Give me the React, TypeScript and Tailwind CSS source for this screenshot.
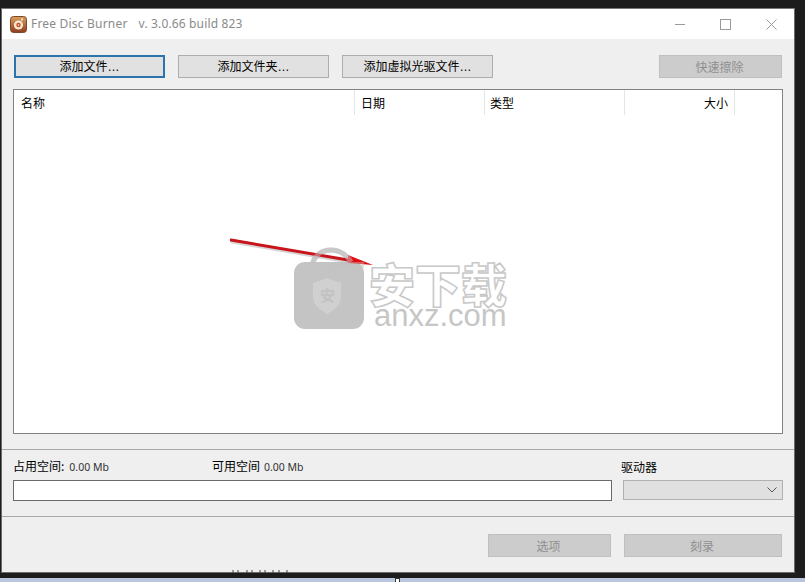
import React from "react";

const cjk = { fontFamily: '"Noto Sans CJK SC","Liberation Sans",sans-serif' };
const latin = { fontFamily: '"Noto Sans","Liberation Sans",sans-serif' };
const dots = { fontFamily: '"Liberation Sans",sans-serif' };

function Btn({ w, label, ellipsis, primary, disabled }: { w: string; label: string; ellipsis?: boolean; primary?: boolean; disabled?: boolean }) {
  return (
    <div
      className={`${w} h-[23px] flex items-center justify-center text-[12px] leading-none ${
        disabled
          ? "bg-[#cccccc] border border-[#bfbfbf] text-[#8f8f8f] pr-[2px]"
          : primary
            ? "bg-[#e1e1e1] border-2 border-[#2b74ad] text-black"
            : "bg-[#e1e1e1] border border-[#adadad] text-black"
      }`}
    >
      <span>
        {label}
        {ellipsis ? <span style={dots}>…</span> : null}
      </span>
    </div>
  );
}

function Col({ w, label, pad }: { w: string; label: string; pad: string }) {
  return (
    <div className={`${w} h-[25px] shrink-0 border-r border-[#e5e5e5] flex items-center text-[12px] text-black ${pad}`}>
      {label}
    </div>
  );
}

export default function App() {
  return (
    <div className="relative w-[805px] h-[582px] overflow-hidden bg-[#1c1c1c] flex flex-col" style={cjk}>
      <div className="ml-[1px] mt-[8px] w-[794px] h-[565px] shrink-0 flex flex-col bg-[#efefef] border border-[#6b6b6b] border-t-[#777]">
        {/* title bar */}
        <div className="h-[30px] bg-white flex items-center shrink-0">
          <svg width="17" height="17" viewBox="0 0 17 17" className="ml-[8px]">
            <defs>
              <linearGradient id="g" x1="0" y1="0" x2="0" y2="1">
                <stop offset="0" stopColor="#d9a05e" />
                <stop offset="1" stopColor="#8e3d1f" />
              </linearGradient>
            </defs>
            <rect x="0.5" y="0.5" width="16" height="16" rx="3" fill="url(#g)" stroke="#7a4a2a" />
            <circle cx="8.5" cy="9" r="4.6" fill="#f6e6d0" />
            <circle cx="8.5" cy="9" r="2.2" fill="#c8481f" />
            <circle cx="8.5" cy="9" r="0.8" fill="#fff" />
            <rect x="11" y="2.5" width="2" height="2" fill="#f6e6d0" />
          </svg>
          <span className="ml-[4px] text-[12px] tracking-[0.2px] text-[#8a8a8a]" style={latin}>
            Free Disc Burner
          </span>
          <span className="ml-[11px] text-[12px] tracking-[0.15px] text-[#8a8a8a]" style={latin}>
            v. 3.0.66 build 823
          </span>
          <div className="ml-auto flex items-center mr-[17px] gap-[35px]">
            <svg width="10" height="10" viewBox="0 0 10 10"><path d="M0 5.5h10" stroke="#9a9a9a" fill="none" /></svg>
            <svg width="11" height="11" viewBox="0 0 11 11"><rect x="0.5" y="0.5" width="10" height="10" stroke="#9a9a9a" fill="none" /></svg>
            <svg width="11" height="11" viewBox="0 0 11 11"><path d="M0.5 0.5l10 10M10.5 0.5l-10 10" stroke="#9a9a9a" fill="none" /></svg>
          </div>
        </div>

        {/* toolbar */}
        <div className="flex items-center mt-[16px] ml-[12px] mr-[12px] shrink-0">
          <Btn w="w-[151px]" label="添加文件" ellipsis primary />
          <div className="w-[13px]" />
          <Btn w="w-[151px]" label="添加文件夹" ellipsis />
          <div className="w-[13px]" />
          <Btn w="w-[151px]" label="添加虚拟光驱文件" ellipsis />
          <div className="ml-auto">
            <Btn w="w-[123px]" label="快速擦除" disabled />
          </div>
        </div>

        {/* list */}
        <div className="mt-[11px] ml-[11px] w-[770px] h-[345px] bg-white border border-[#828282] shrink-0 flex">
          <Col w="w-[341px]" label="名称" pad="pl-[7px]" />
          <Col w="w-[130px]" label="日期" pad="pl-[6px]" />
          <Col w="w-[140px]" label="类型" pad="pl-[5px]" />
          <Col w="w-[110px]" label="大小" pad="justify-end pr-[6px]" />
        </div>

        <div className="mt-[15px] h-px bg-[#a8a8a8] shrink-0" />

        {/* space */}
        <div className="flex ml-[11px] mr-[11px] mt-[3px] shrink-0">
          <div className="w-[599px]">
            <div className="h-[27px] flex items-center text-[12px] text-black leading-none">
              <span className="w-[199px]">
                占用空间:<span className="ml-[5px] text-[10.5px] text-[#333]" style={latin}>0.00 Mb</span>
              </span>
              <span>
                可用空间<span className="ml-[4px] text-[10.5px] text-[#333]" style={latin}>0.00 Mb</span>
              </span>
            </div>
            <div className="h-[21px] bg-white border border-[#6a6a6a]" />
          </div>
          <div className="ml-[11px] w-[160px]">
            <div className="h-[27px] flex items-center text-[12px] text-black -ml-[2px]">驱动器</div>
            <div className="h-[20px] bg-[#e0e0e0] border border-[#b0b0b0] flex items-center justify-end pr-[5px]">
              <svg width="10" height="6" viewBox="0 0 10 6"><path d="M0.5 0.5L5 5l4.5-4.5" stroke="#555" fill="none" /></svg>
            </div>
          </div>
        </div>

        <div className="mt-[15px] h-px bg-[#a8a8a8] shrink-0" />

        {/* bottom buttons */}
        <div className="flex justify-end mt-[17px] mr-[12px] gap-[13px] shrink-0">
          <Btn w="w-[123px]" label="选项" disabled />
          <Btn w="w-[158px]" label="刻录" disabled />
        </div>
      </div>
      <div className="h-[5px] shrink-0" />
      <div className="flex-1 bg-[#b9c5dd]" />

      {/* bits of the desktop showing at the lower edge */}
      <svg width="120" height="3" viewBox="0 0 120 3" className="absolute left-[232px] top-[570px]">
        <path d="M1 0v3M6 0v3M15 0v3M20 0v3M28 0v3M33 0v3M41 0v3M47 0v3M55 0v3" stroke="#444" fill="none" />
      </svg>
      <div className="absolute left-[395px] top-[578px] w-[5px] h-[4px] bg-white border border-b-0 border-[#333]" />

      {/* watermark + annotation overlay */}
      <div className="absolute left-[230px] top-[235px] w-[290px] h-[100px] pointer-events-none">
        <svg width="290" height="100" viewBox="0 0 290 100" className="absolute left-0 top-0">
          <path d="M82 29C86 18 94 15 101 15S116 18 122 29" fill="none" stroke="#c9c9c9" strokeWidth="5" />
          <rect x="64" y="27" width="70" height="67" rx="11" fill="#c4c4c4" />
          <path d="M97 43l14 5v14c0 8-7 13-14 17-7-4-14-9-14-17V48z" fill="#d0d0d0" />
          <path d="M2 7L118 27" stroke="#999" strokeOpacity="0.4" strokeWidth="3" strokeLinecap="round" fill="none" />
          <path d="M1 5L118 25" stroke="#c8141a" strokeWidth="3" strokeLinecap="round" fill="none" />
          <path d="M118 20L143 30 118 28z" fill="#e00d14" />
          <path d="M84 25C87 18 94 15 101 15S116 18 121 27" fill="none" stroke="#c9c9c9" strokeOpacity="0.5" strokeWidth="5" />
          <rect x="100" y="27" width="34" height="6" fill="#c4c4c4" fillOpacity="0.45" />
        </svg>
        <span className="absolute left-[90px] top-[52px] text-[15px] leading-none text-[#c2c2c2] font-bold">安</span>
        <span className="absolute left-[139px] top-[24px] text-[46px] leading-none font-black text-white [-webkit-text-stroke:1.5px_#c8c8c8]">
          安下载
        </span>
        <span
          className="absolute left-[144px] top-[65px] text-[31px] leading-none text-[#c6c6c6]"
          style={{ fontFamily: '"Liberation Sans",sans-serif' }}
        >
          anxz.com
        </span>
      </div>
    </div>
  );
}
